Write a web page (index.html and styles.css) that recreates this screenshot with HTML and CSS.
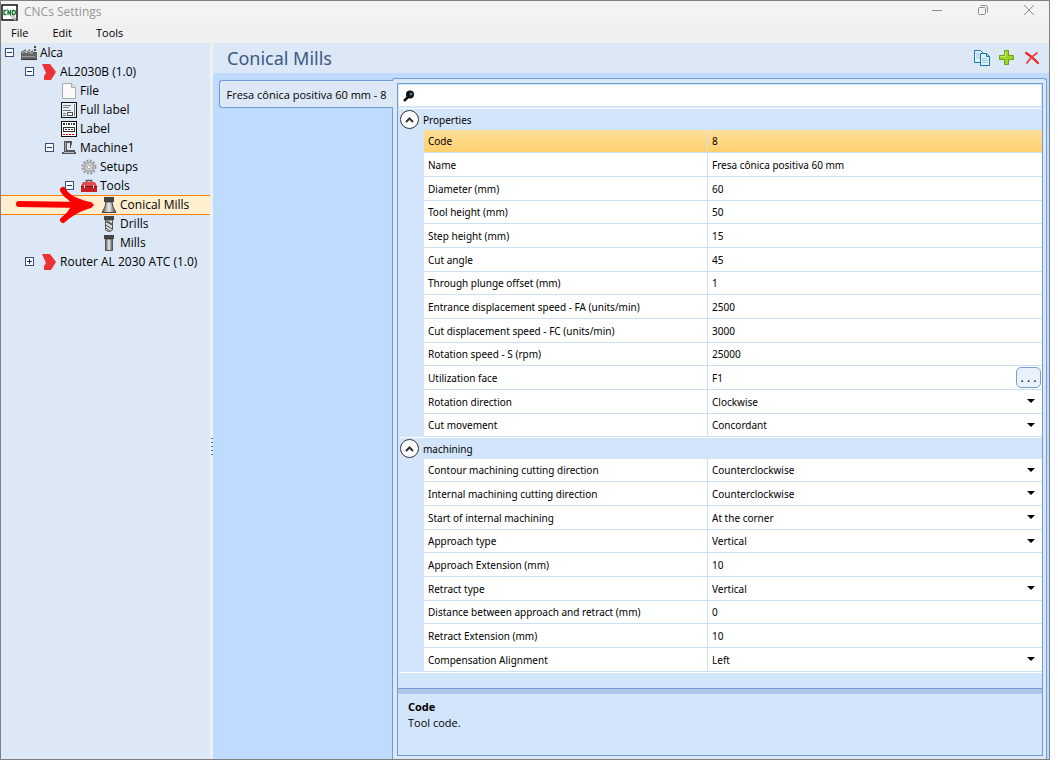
FILE: index.html
```html
<!DOCTYPE html>
<html lang="en">
    <head>
        <meta charset="UTF-8" />
        <meta name="viewport" content="width=device-width, initial-scale=1.0" />
        <title>CNCs Settings</title>
        <link rel="stylesheet" href="styles.css">
    </head>
    <body>
        <div class="window">
            <header class="titlebar">
                <svg class="app-icon" width="17" height="17" viewBox="0 0 17 17">
                    <rect x="1" y="1" width="15" height="15" fill="#fff" stroke="#111" stroke-width="1.500" />
                    <path d="M5.500 6.500H3v4h2.500M7 11V6.500l2.500 4V6M11.500 6v4.500h2l1-1.500v-1l-1-1.500h-2" fill="none" stroke="#17752b" stroke-width="1.300" />
                    <circle cx="12" cy="13" r="1.500" fill="#ddd" stroke="#999" stroke-dasharray="1 1" />
                    <circle cx="14" cy="15" r="1.500" fill="#aaa" />
                </svg>
                <h1>CNCs Settings</h1>
                <div class="window-buttons">
                    <button aria-label="Minimize"><svg width="12" height="12"><path d="M1 6.500h10" /></svg></button>
                    <button aria-label="Restore"><svg width="12" height="12"><rect x="1.500" y="3.500" width="7" height="7" rx="1" /><path d="M3.500 1.500h5q2 0 2 2v5" /></svg></button>
                    <button aria-label="Close"><svg width="12" height="12"><path d="M1 1l10 10M11 1L1 11" /></svg></button>
                </div>
            </header>
            <nav class="menubar">
                <button>File</button>
                <button>Edit</button>
                <button>Tools</button>
            </nav>
            <div class="workspace">
                <aside class="sidebar">
                    <ul class="tree">
                        <li>
                            <div class="node">
                                <button class="expander" aria-label="Collapse"></button>
                                <svg width="16" height="16"><path d="M0 7l5-3v3l4-3v3l3-2v2h4v8H0z" fill="#666" /><path d="M1 8l4-2v2l4-2v2h3" fill="none" stroke="#bbb" /><path d="M0 14.500h16" stroke="#333" /><path d="M1 11.500h13" stroke="#999" /><path d="M14 1v7" stroke="#444" stroke-dasharray="2 1" stroke-width="2" /></svg>
                                <a href="#">Alca</a>
                            </div>
                            <ul>
                                <li>
                                    <div class="node">
                                        <button class="expander" aria-label="Collapse"></button>
                                        <svg width="16" height="16"><path d="M1 0h8l6 8-5 8H3V12l2-3z" fill="#ec3237" /></svg>
                                        <a href="#">AL2030B (1.0)</a>
                                    </div>
                                    <ul>
                                        <li>
                                            <div class="node">
                                                <span class="leaf"></span>
                                                <svg width="16" height="16"><path d="M1.500.5h9l4 4v11h-13z" fill="#fafafa" stroke="#aaa" /><path d="M10.500.5v4h4" fill="#ddd" stroke="#aaa" /></svg>
                                                <a href="#">File</a>
                                            </div>
                                        </li>
                                        <li>
                                            <div class="node">
                                                <span class="leaf"></span>
                                                <svg width="16" height="16"><rect x=".5" y=".5" width="15" height="15" fill="#e8f0fa" stroke="#111" /><path d="M2 3.500h8M2 5.500h6M2 8.500h8M2 11.500h3M2 13.500h3" stroke="#777" /><rect x="6.500" y="10.500" width="5" height="3" fill="#fff" stroke="#555" /><path d="M13.500 2v12" fill="none" stroke="#777" /></svg>
                                                <a href="#">Full label</a>
                                            </div>
                                        </li>
                                        <li>
                                            <div class="node">
                                                <span class="leaf"></span>
                                                <svg width="16" height="16"><rect x=".5" y=".5" width="15" height="15" fill="#fff" stroke="#111" /><path d="M2 3h12" stroke="#333" stroke-width="2" stroke-dasharray="2 1 1 1" /><rect x="2.500" y="6.500" width="11" height="4" fill="none" stroke="#333" /><path d="M4 8.500h8" stroke="#333" stroke-dasharray="2 1" /><path d="M2 13.500h12" stroke="#f00" stroke-dasharray="2 1" /></svg>
                                                <a href="#">Label</a>
                                            </div>
                                        </li>
                                        <li>
                                            <div class="node">
                                                <button class="expander" aria-label="Collapse"></button>
                                                <svg width="16" height="16"><path d="M3 1h8v4H9V3H6v7h8v2h1v2H1v-2h2z" fill="#555" /><path d="M4.500 2v9" stroke="#aaa" /><path d="M9.500 5v3" stroke="#444" /><path d="M3 12.500h10" stroke="#bbb" /></svg>
                                                <a href="#">Machine1</a>
                                            </div>
                                            <ul>
                                                <li>
                                                    <div class="node">
                                                        <span class="leaf"></span>
                                                        <svg width="16" height="16"><circle cx="8" cy="8" r="6.500" fill="none" stroke="#999" stroke-width="2" stroke-dasharray="2 1.400" /><circle cx="8" cy="8" r="4.500" fill="#ddd" stroke="#aaa" stroke-width="2" /><circle cx="8" cy="8" r="2" fill="#f6f9fd" stroke="#999" /></svg>
                                                        <a href="#">Setups</a>
                                                    </div>
                                                </li>
                                                <li>
                                                    <div class="node">
                                                        <button class="expander" aria-label="Collapse"></button>
                                                        <svg width="16" height="16"><path d="M5.500 5V2.500h5V5" fill="none" stroke="#555" stroke-width="1.500" /><path d="M2 4h12l2 4H0z" fill="#e3494a" /><path d="M0 8h16v6H0z" fill="#c42127" /><path d="M0 8.500h16" stroke="#7d1418" /><path d="M3.500 7v3M12.500 7v3" stroke="#eee" /></svg>
                                                        <a href="#">Tools</a>
                                                    </div>
                                                    <ul>
                                                        <li>
                                                            <div class="node selected">
                                                                <span class="leaf"></span>
                                                                <svg width="16" height="16"><defs><linearGradient id="steel"><stop offset="0" stop-color="#555" /><stop offset=".5" stop-color="#eee" /><stop offset="1" stop-color="#444" /></linearGradient></defs><path d="M5 5h6l1 5 3 5.500H1L4 10z" fill="url(#steel)" stroke="#444" /><path d="M3 0h10v5H3z" fill="#444" /></svg>
                                                                <a href="#">Conical Mills</a>
                                                            </div>
                                                        </li>
                                                        <li>
                                                            <div class="node">
                                                                <span class="leaf"></span>
                                                                <svg width="16" height="16"><path d="M4.500 4h7v10L8 16l-3.500-2z" fill="#ddd" stroke="#555" /><path d="M4 5l7 4M5 9l6 4M6 5l5 3M5 12l4 3" stroke="#444" /><path d="M3 0h10v4H3z" fill="#444" /></svg>
                                                                <a href="#">Drills</a>
                                                            </div>
                                                        </li>
                                                        <li>
                                                            <div class="node">
                                                                <span class="leaf"></span>
                                                                <svg width="16" height="16"><path d="M4.500 4h7v11.500h-7z" fill="url(#steel)" stroke="#555" /><path d="M3 0h10v4H3z" fill="#444" /></svg>
                                                                <a href="#">Mills</a>
                                                            </div>
                                                        </li>
                                                    </ul>
                                                </li>
                                            </ul>
                                        </li>
                                    </ul>
                                </li>
                                <li>
                                    <div class="node">
                                        <button class="expander closed" aria-label="Expand"></button>
                                        <svg width="16" height="16"><path d="M1 0h8l6 8-5 8H3V12l2-3z" fill="#ec3237" /></svg>
                                        <a href="#">Router AL 2030 ATC (1.0)</a>
                                    </div>
                                </li>
                            </ul>
                        </li>
                    </ul>
                    <svg class="pointer" width="80" height="38" viewBox="0 0 80 38">
                        <path d="M3 18L66 19M47 4Q52 14 74 19Q57 24 47 34" fill="none" stroke="#f00" stroke-width="6" stroke-linecap="round" stroke-linejoin="round" />
                        <path d="M50 10L79 19L50 28L56 19z" fill="#f00" />
                    </svg>
                </aside>
                <div class="splitter"><span class="grip"></span></div>
                <main>
                    <div class="main-header">
                        <h2>Conical Mills</h2>
                        <div class="actions">
                            <button aria-label="Copy"><svg width="16" height="16"><path d="M.5.500h6l3 3v9h-9z" fill="#e4f3fb" stroke="#1778ae" /><path d="M2 4h4M2 6h4M2 8h4" stroke="#9cc7df" /><path d="M6.500 3.500h6l3 3v9h-9z" fill="#e4f3fb" stroke="#1778ae" /><path d="M12.500 3.500v3h3" fill="none" stroke="#1778ae" /><path d="M8 8.500h5M8 10.500h6M8 12.500h6" stroke="#9cc7df" /></svg></button>
                            <button aria-label="Add"><svg width="16" height="16"><path d="M5.500.500h4v5h5v4h-5v5h-4v-5h-5v-4h5z" fill="#9bd62b" stroke="#6ba315" /><path d="M6.500 1.500v5h-5" fill="none" stroke="#c6ef6c" /></svg></button>
                            <button aria-label="Delete"><svg width="16" height="16"><path d="M2 3Q7 6 14 13" fill="none" stroke="#f02424" stroke-width="2.200" stroke-linecap="round" /><path d="M13 3Q6 8 3 13" fill="none" stroke="#f04040" stroke-width="1.800" stroke-linecap="round" /></svg></button>
                        </div>
                    </div>
                    <div class="content">
                        <div class="tabs">
                            <button class="tab">Fresa cônica positiva 60 mm - 8</button>
                        </div>
                        <div class="page">
                            <div class="grid">
                                <label class="search">
                                    <svg width="12" height="12"><path d="M1 11l4-4" stroke="#111" stroke-width="2.500" /><circle cx="7" cy="4.500" r="4" fill="#111" /><circle cx="8" cy="4" r="1.500" fill="#4d7396" /></svg>
                                    <input type="text" aria-label="Search properties" />
                                </label>
                                <section class="group">
                                    <div class="group-title">
                                        <button class="round" aria-label="Collapse"><svg width="9" height="6"><path d="M1 5l3.500-3.500L8 5" /></svg></button>
                                        <h3>Properties</h3>
                                    </div>
                                    <table>
                                        <tr class="current"><th><label for="code">Code</label></th><td><input id="code" value="8" /></td></tr>
                                        <tr><th><label for="name">Name</label></th><td><input id="name" value="Fresa cônica positiva 60 mm" /></td></tr>
                                        <tr><th><label for="diameter">Diameter (mm)</label></th><td><input id="diameter" value="60" /></td></tr>
                                        <tr><th><label for="height">Tool height (mm)</label></th><td><input id="height" value="50" /></td></tr>
                                        <tr><th><label for="step">Step height (mm)</label></th><td><input id="step" value="15" /></td></tr>
                                        <tr><th><label for="angle">Cut angle</label></th><td><input id="angle" value="45" /></td></tr>
                                        <tr><th><label for="plunge">Through plunge offset (mm)</label></th><td><input id="plunge" value="1" /></td></tr>
                                        <tr><th><label for="fa">Entrance displacement speed - FA (units/min)</label></th><td><input id="fa" value="2500" /></td></tr>
                                        <tr><th><label for="fc">Cut displacement speed - FC (units/min)</label></th><td><input id="fc" value="3000" /></td></tr>
                                        <tr><th><label for="rpm">Rotation speed - S (rpm)</label></th><td><input id="rpm" value="25000" /></td></tr>
                                        <tr><th><label for="face">Utilization face</label></th><td><div class="with-button"><input id="face" value="F1" /><button class="more" aria-label="Choose face">. . .</button></div></td></tr>
                                        <tr><th><label for="rotation">Rotation direction</label></th><td class="drop"><select id="rotation"><option>Clockwise</option><option>Counterclockwise</option></select></td></tr>
                                        <tr><th><label for="movement">Cut movement</label></th><td class="drop"><select id="movement"><option>Concordant</option></select></td></tr>
                                    </table>
                                </section>
                                <section class="group">
                                    <div class="group-title">
                                        <button class="round" aria-label="Collapse"><svg width="9" height="6"><path d="M1 5l3.500-3.500L8 5" /></svg></button>
                                        <h3>machining</h3>
                                    </div>
                                    <table>
                                        <tr><th><label for="contour">Contour machining cutting direction</label></th><td class="drop"><select id="contour"><option>Counterclockwise</option><option>Clockwise</option></select></td></tr>
                                        <tr><th><label for="internal">Internal machining cutting direction</label></th><td class="drop"><select id="internal"><option>Counterclockwise</option><option>Clockwise</option></select></td></tr>
                                        <tr><th><label for="start">Start of internal machining</label></th><td class="drop"><select id="start"><option>At the corner</option></select></td></tr>
                                        <tr><th><label for="approach">Approach type</label></th><td class="drop"><select id="approach"><option>Vertical</option></select></td></tr>
                                        <tr><th><label for="approach-ext">Approach Extension (mm)</label></th><td><input id="approach-ext" value="10" /></td></tr>
                                        <tr><th><label for="retract">Retract type</label></th><td class="drop"><select id="retract"><option>Vertical</option></select></td></tr>
                                        <tr><th><label for="distance">Distance between approach and retract (mm)</label></th><td><input id="distance" value="0" /></td></tr>
                                        <tr><th><label for="retract-ext">Retract Extension (mm)</label></th><td><input id="retract-ext" value="10" /></td></tr>
                                        <tr><th><label for="alignment">Compensation Alignment</label></th><td class="drop"><select id="alignment"><option>Left</option><option>Right</option></select></td></tr>
                                    </table>
                                </section>
                                <div class="description">
                                    <h4>Code</h4>
                                    <p>Tool code.</p>
                                </div>
                            </div>
                        </div>
                    </div>
                </main>
            </div>
        </div>
    </body>
</html>
```
FILE: styles.css
```css
* {
    box-sizing: border-box;
}
body {
    margin: 0;
    padding: 0 8px 9px 0;
    background-color: white;
    font-family: "Open Sans", "Noto Sans", sans-serif;
    font-size: 12px;
    color: black;
}
h1, h2, h3, h4, p, ul {
    margin: 0;
    padding: 0;
    font-weight: normal;
}
button, input, select {
    font: inherit;
    color: inherit;
    margin: 0;
    padding: 0;
    border: 0;
    background: none;
}
svg {
    display: block;
    flex: none;
}

.window {
    display: flex;
    flex-direction: column;
    min-height: calc(100vh - 9px);
    border: 1px solid #808080;
    background-color: #f0f0f0;
}
.titlebar {
    display: flex;
    align-items: center;
    height: 22px;
    background-color: #f3f3f3;
}
.titlebar h1 {
    flex: 1;
    margin-left: 6px;
    padding-bottom: 2px;
    font-size: 12px;
    color: #969696;
}
.window-buttons {
    display: flex;
    gap: 34px;
    padding: 0 14px 4px 0;
}
.window-buttons path,
.window-buttons rect {
    fill: none;
    stroke: #8c8c8c;
}
.menubar {
    display: flex;
    gap: 24px;
    height: 20px;
    padding: 0 0 2px 10px;
    font-size: 11px;
}

.workspace {
    display: flex;
    flex: 1;
}
.sidebar {
    position: relative;
    width: 209px;
    background-color: #dce8f6;
}
.tree,
.tree ul {
    list-style: none;
}
.node {
    display: flex;
    align-items: center;
    gap: 3px;
    height: 19px;
    padding-left: 4px;
}
.tree ul .node {
    padding-left: 24px;
}
.tree ul ul .node {
    padding-left: 44px;
}
.tree ul ul ul .node {
    padding-left: 64px;
}
.tree ul ul ul ul .node {
    padding-left: 84px;
}
.node a {
    color: black;
    text-decoration: none;
    white-space: nowrap;
}
.node.selected {
    background-color: #ffefcf;
    box-shadow: inset 0 1px #ff8000, 0 1px #ff8000;
}
.expander,
.leaf {
    flex: none;
    width: 9px;
    height: 9px;
    margin-right: 4px;
}
.expander {
    border: 1px solid #33507c;
    background: linear-gradient(#1b3a6b, #1b3a6b) center / 5px 1px no-repeat white;
}
.expander.closed {
    background: linear-gradient(#1b3a6b, #1b3a6b) center / 5px 1px no-repeat, linear-gradient(#1b3a6b, #1b3a6b) center / 1px 5px no-repeat white;
}
/* red arrow over the tree */
.pointer {
    position: absolute;
    left: 15px;
    top: 143px;
}
.splitter {
    display: flex;
    align-items: center;
    justify-content: flex-end;
    width: 3px;
}
.grip {
    width: 2px;
    height: 19px;
    margin-top: 92px;
    background: repeating-linear-gradient(#2d78d8 0 1px, transparent 1px 4px);
}

main {
    display: flex;
    flex-direction: column;
    flex: 1;
    background-color: #bfdbff;
}
.main-header {
    display: flex;
    align-items: center;
    justify-content: space-between;
    height: 30px;
    padding: 0 9px 0 14px;
    background-color: #dce8f6;
}
.main-header h2 {
    font-family: "Noto Sans", sans-serif;
    font-size: 18px;
    color: #3b5a82;
}
.actions {
    display: flex;
    gap: 9px;
}
.content {
    display: flex;
    flex: 1;
    padding: 5px 2px 0 6px;
    font-family: "Noto Sans", sans-serif;
    font-size: 10px;
}
.tabs {
    position: relative;
    z-index: 1;
    width: 174px;
    margin-right: -1px;
    padding-top: 2px;
}
.tab {
    width: 100%;
    height: 28px;
    border: 1px solid #6f9bd9;
    border-right: 0;
    border-radius: 3px 0 0 3px;
    background-color: #dce8f6;
    font-family: "Open Sans", sans-serif;
    font-size: 11px;
    white-space: nowrap;
}
.page {
    flex: 1;
    display: flex;
    padding: 4px 3px 3px 4px;
    border: 1px solid #6f9bd9;
    border-bottom: 0;
    border-radius: 3px 3px 0 0;
    background-color: #dce8f6;
}
.grid {
    flex: 1;
    display: flex;
    flex-direction: column;
    border: 1px solid #6f9bd9;
    background-color: #d3e5fb;
}
.search {
    display: flex;
    align-items: center;
    gap: 6px;
    height: 21px;
    margin: 1px 1px 2px;
    padding-left: 4px;
    background-color: white;
}
.search input {
    flex: 1;
    outline: 0;
}
.group {
    margin-left: 1px;
    border-top: 1px solid white;
    border-radius: 3px 3px 0 0;
}
.group + .group {
    border-bottom: 1px solid white;
}
.group-title {
    display: flex;
    align-items: center;
    gap: 4px;
    height: 21px;
    padding-left: 1px;
}
.group-title h3 {
    font-size: 10px;
}
.round {
    display: flex;
    align-items: center;
    justify-content: center;
    width: 19px;
    height: 19px;
    border: 1px solid #333;
    border-radius: 50%;
    background-color: white;
}
.round path {
    fill: none;
    stroke: #333;
    stroke-width: 2;
}
table {
    width: calc(100% - 25px);
    margin-left: 25px;
    border-collapse: separate;
    border-spacing: 0;
    table-layout: fixed;
    background-color: white;
}
tr {
    height: 24px;
}
tr:nth-child(3n + 1) {
    height: 23px;
}
th,
td {
    padding: 0 4px;
    border-bottom: 1px solid #cddff5;
    font-weight: normal;
    text-align: left;
    line-height: 14px;
}
th {
    width: 284px;
    border-right: 1px solid #cddff5;
}
td input,
td select {
    display: block;
    width: 100%;
    height: 14px;
    line-height: 14px;
    outline: 0;
    appearance: none;
}
.current {
    background: linear-gradient(#ffdf98, #ffcf6c);
}
.drop {
    position: relative;
}
.drop::after {
    content: "";
    position: absolute;
    right: 7px;
    top: 9px;
    border: 4px solid transparent;
    border-top-color: black;
    border-bottom: 0;
    pointer-events: none;
}
.with-button {
    display: flex;
    align-items: center;
    height: 20px;
    margin-right: -3px;
}
.more {
    flex: none;
    width: 25px;
    height: 21px;
    border: 1px solid #7c9fd0;
    border-radius: 5px;
    background-color: #e9f1fc;
    font-size: 12px;
}
.description {
    flex: 1;
    min-height: 60px;
    margin-top: 15px;
    padding: 6px 10px;
    border-top: 1px solid #6f9bd9;
    box-shadow: inset 0 5px #b0c8e8;
    font-family: "Open Sans", sans-serif;
    font-size: 11px;
    line-height: 16px;
}
.description h4 {
    margin-top: 4px;
    font-size: 11px;
    font-weight: bold;
}
```
